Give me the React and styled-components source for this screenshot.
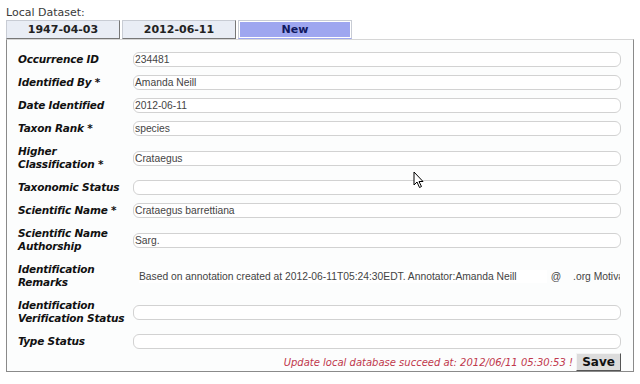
import React from 'react';
import styled, { createGlobalStyle } from 'styled-components';

const GlobalStyle = createGlobalStyle`
    html, body {
        margin: 0;
        padding: 0;
        background: #fff;
    }
    body {
        font-family: "DejaVu Sans", Verdana, sans-serif;
    }
`;

const Page = styled.div`
    position: relative;
    width: 640px;
    height: 384px;
    padding: 4px 0 0 6px;
    box-sizing: border-box;
    overflow: hidden;
`;

const Heading = styled.div`
    font-size: 11px;
    color: #3a3a3a;
    height: 16px;
    line-height: 18px;
`;

const TabBar = styled.div`
    display: flex;
    gap: 2px;
    height: 19px;
`;

const Tab = styled.div`
    width: 114px;
    box-sizing: border-box;
    height: 19px;
    line-height: 17px;
    text-align: center;
    font-size: 11px;
    font-weight: bold;
    color: ${p => (p.active ? '#101860' : '#222')};
    background: ${p => (p.active ? '#9ea6f0' : '#e9edf5')};
    border: 1px solid #c8ccd4;
    border-right-color: ${p => (p.active ? '#c8ccd4' : '#777')};
    border-bottom-color: ${p => (p.active ? '#9ea6f0' : '#777')};
    box-shadow: ${p => (p.active ? 'inset 0 0 0 1px #fff' : 'none')};
`;

const Panel = styled.div`
    width: 628px;
    box-sizing: border-box;
    border: 1px solid #8a8a8a;
    border-top-color: #d6d6d6;
    background: #fcfdfd;
    padding: 8px 12px 0 10px;
`;

const Row = styled.div`
    display: grid;
    grid-template-columns: 116px 488px;
    align-items: center;
    height: ${p => (p.tall ? 36 : 23)}px;
`;

const Label = styled.div`
    font-size: 10.5px;
    letter-spacing: -0.2px;
    font-weight: bold;
    font-style: italic;
    color: #111;
    line-height: 13px;
    padding-left: 1px;
    white-space: nowrap;
`;

const Field = styled.div`
    height: 15px;
    box-sizing: border-box;
    border: 1px solid #d2d2d2;
    border-radius: 6px;
    background: #fff;
    font-family: "Liberation Sans", Arial, sans-serif;
    font-size: 10.3px;
    line-height: 13px;
    color: #444;
    padding-left: 1px;
    white-space: nowrap;
    overflow: hidden;
`;

const RemarkLine = styled(Field)`
    border-color: transparent;
    background: transparent;
    padding-left: 5px;
`;

const RemarkText = styled.span`
    display: inline-block;
    background: #fff;
    padding-right: 30px;
`;

const RemarkPart = styled.span`
    margin-left: ${p => p.gap}px;
`;

const Footer = styled.div`
    display: flex;
    justify-content: flex-end;
    align-items: center;
    gap: 3px;
    height: 18px;
`;

const Message = styled.span`
    font-size: 10px;
    font-style: italic;
    color: #c0384c;
`;

const SaveButton = styled.button`
    width: 45px;
    height: 18px;
    padding: 0;
    font-family: "DejaVu Sans", Verdana, sans-serif;
    font-size: 12px;
    font-weight: bold;
    color: #111;
    background: #dcdcdc;
    border: 1px solid #f4f4f4;
    border-right-color: #555;
    border-bottom-color: #555;
`;

const Cursor = styled.svg`
    position: absolute;
    left: 413px;
    top: 171px;
`;

const fields = [
    { label: 'Occurrence ID', value: '234481' },
    { label: 'Identified By *', value: 'Amanda Neill' },
    { label: 'Date Identified', value: '2012-06-11' },
    { label: 'Taxon Rank *', value: 'species' },
    { label: ['Higher', 'Classification *'], value: 'Crataegus' },
    { label: 'Taxonomic Status', value: '' },
    { label: 'Scientific Name *', value: 'Crataegus barrettiana' },
    { label: ['Scientific Name', 'Authorship'], value: 'Sarg.' },
    { label: ['Identification', 'Remarks'], remark: true },
    { label: ['Identification', 'Verification Status'], value: '' },
    { label: 'Type Status', value: '' },
];

const App = () => (
    <Page>
        <GlobalStyle />
        <Heading>Local Dataset:</Heading>
        <TabBar>
            <Tab>1947-04-03</Tab>
            <Tab>2012-06-11</Tab>
            <Tab active>New</Tab>
        </TabBar>
        <Panel>
            {fields.map(f => {
                const tall = Array.isArray(f.label);
                return (
                    <Row key={tall ? f.label.join(' ') : f.label} tall={tall}>
                        <Label>
                            {tall ? f.label.map(l => <div key={l}>{l}</div>) : f.label}
                        </Label>
                        {f.remark ? (
                            <RemarkLine>
                                <RemarkText>Based on annotation created at 2012-06-11T05:24:30EDT. Annotator:Amanda Neill</RemarkText>
                                <RemarkPart gap={4}>@</RemarkPart>
                                <RemarkPart gap={12}>.org Motivation</RemarkPart>
                            </RemarkLine>
                        ) : (
                            <Field>{f.value}</Field>
                        )}
                    </Row>
                );
            })}
            <Footer>
                <Message>Update local database succeed at: 2012/06/11 05:30:53 !</Message>
                <SaveButton>Save</SaveButton>
            </Footer>
        </Panel>
        <Cursor width="12" height="18" viewBox="0 0 12 18">
            <path d="M1 1 L1 14 L4 11 L6.5 16.5 L8.5 15.5 L6 10.5 L10 10.5 Z" fill="#fff" stroke="#000" strokeWidth="1" strokeLinejoin="miter" />
        </Cursor>
    </Page>
);

export default App;
